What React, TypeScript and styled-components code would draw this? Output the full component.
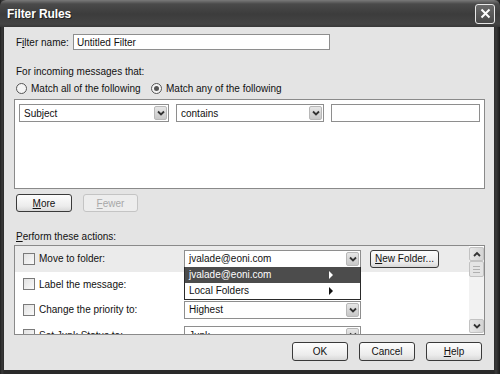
import React from "react";
import styled, { createGlobalStyle } from "styled-components";

const Global = createGlobalStyle`
  html, body { margin: 0; padding: 0; background: #2e2e2e; }
  body { font-family: "Liberation Sans", Arial, sans-serif; font-size: 10px; color: #111; }
`;

const Window = styled.div`
  width: 500px;
  height: 374px;
  display: flex;
  flex-direction: column;
  background: linear-gradient(90deg, #1e1e1e, #3a3a3a 2px, #2a2a2a 4px, #2a2a2a 494px, #3a3a3a 496px, #1a1a1a);
  overflow: hidden;
`;

const TitleBar = styled.div`
  height: 27px;
  flex: none;
  display: flex;
  align-items: center;
  justify-content: space-between;
  padding: 0 5px 0 7px;
  background: linear-gradient(#7a7a7a, #4a4a4a 4px, #3c3c3c 14px, #444 24px, #383838);
  border-radius: 6px 6px 0 0;
`;

const Title = styled.span`
  color: #fff;
  font-weight: bold;
  font-size: 12px;
  letter-spacing: -0.1px;
  text-shadow: 1px 1px 0 #222;
`;

const CloseButton = styled.div`
  width: 18px;
  height: 18px;
  border: 1px solid #e8e8e8;
  border-radius: 3px;
  background: linear-gradient(#6a6a6a, #4a4a4a);
  display: flex;
  align-items: center;
  justify-content: center;
`;

const Body = styled.div`
  flex: 1;
  margin: 0 6px 4px 4px;
  background: #e4e4e4;
  padding: 7px 9px 0 10px;
  display: flex;
  flex-direction: column;
`;

const FieldRow = styled.div`
  display: flex;
  align-items: center;
  height: 16px;
  padding-left: 2px;
`;

const Label = styled.span<{ $width?: number }>`
  width: ${(p) => (p.$width ? `${p.$width}px` : "auto")};
  flex: none;
  white-space: nowrap;
`;

const TextInput = styled.div<{ $width: number; $height?: number }>`
  width: ${(p) => p.$width}px;
  height: ${(p) => p.$height ?? 16}px;
  box-sizing: border-box;
  border: 1px solid #8e8e8e;
  background: #fff;
  display: flex;
  align-items: center;
  padding-left: 3px;
  flex: none;
`;

const SectionLabel = styled.div<{ $top: number }>`
  margin-top: ${(p) => p.$top}px;
  padding-left: 2px;
  height: 12px;
  line-height: 12px;
`;

const RadioRow = styled.div`
  margin-top: 4px;
  height: 13px;
  display: flex;
  align-items: center;
  padding-left: 2px;
`;

const RadioItem = styled.label<{ $width?: number }>`
  display: flex;
  align-items: center;
  gap: 4px;
  width: ${(p) => (p.$width ? `${p.$width}px` : "auto")};
`;

const RadioCircle = styled.span<{ $checked?: boolean }>`
  width: 11px;
  height: 11px;
  box-sizing: border-box;
  border-radius: 50%;
  border: 1px solid #555;
  background: #f4f4f4;
  display: flex;
  align-items: center;
  justify-content: center;
  &::after {
    content: "";
    display: ${(p) => (p.$checked ? "block" : "none")};
    width: 5px;
    height: 5px;
    border-radius: 50%;
    background: #555;
  }
`;

const RulesBox = styled.div`
  margin-top: 4px;
  height: 90px;
  box-sizing: border-box;
  border: 1px solid #8a8a8a;
  background: #fff;
  padding: 4px;
  display: flex;
  gap: 7px;
  align-items: flex-start;
`;

const ComboBox = styled.div<{ $width: number }>`
  position: relative;
  width: ${(p) => p.$width}px;
  height: 18px;
  box-sizing: border-box;
  border: 1px solid #8e8e8e;
  background: #fff;
  display: flex;
  align-items: center;
  padding-left: 4px;
  flex: none;
`;

const ComboText = styled.span`
  flex: 1;
`;

const ComboArrow = styled.span`
  width: 13px;
  height: 14px;
  margin-right: 1px;
  box-sizing: border-box;
  border: 1px solid #b8b8b8;
  border-radius: 2px;
  background: linear-gradient(#e6e6e6, #c8c8c8);
  display: flex;
  align-items: center;
  justify-content: center;
`;

const ButtonRow = styled.div<{ $top: number; $end?: boolean }>`
  margin-top: ${(p) => p.$top}px;
  display: flex;
  gap: 11px;
  padding-left: 2px;
  justify-content: ${(p) => (p.$end ? "flex-end" : "flex-start")};
  padding-right: ${(p) => (p.$end ? 3 : 0)}px;
`;

const Button = styled.div<{ $width: number; $disabled?: boolean; $height?: number; $gap?: number }>`
  width: ${(p) => p.$width}px;
  height: ${(p) => p.$height ?? 18}px;
  margin-left: ${(p) => p.$gap ?? 0}px;
  box-sizing: border-box;
  border: 1px solid ${(p) => (p.$disabled ? "#c4c4c4" : "#3a3a3a")};
  border-radius: 3px;
  background: ${(p) => (p.$disabled ? "#ededed" : "linear-gradient(#fdfdfd, #ececec 70%, #d8d8d8)")};
  color: ${(p) => (p.$disabled ? "#a8a8a8" : "#111")};
  display: flex;
  align-items: center;
  justify-content: center;
  flex: none;
  u { text-decoration: underline; }
`;

const ActionsBox = styled.div`
  margin-top: 2px;
  height: 90px;
  box-sizing: border-box;
  border: 1px solid #8a8a8a;
  background: #fff;
  display: flex;
  overflow: hidden;
`;

const ActionRows = styled.div`
  flex: 1;
`;

const ActionRow = styled.div<{ $active?: boolean }>`
  height: 25.5px;
  display: flex;
  align-items: center;
  padding-left: 8px;
  background: ${(p) => (p.$active ? "#ebebeb" : "#fff")};
`;

const CheckBox = styled.span`
  width: 12px;
  height: 12px;
  box-sizing: border-box;
  border: 1px solid #7a7a7a;
  background: linear-gradient(135deg, #e2e2e2, #fafafa);
  margin-right: 4px;
  flex: none;
`;

const Menu = styled.div`
  position: absolute;
  top: 16px;
  left: -1px;
  width: 177px;
  box-sizing: border-box;
  border: 1px solid #2a2a2a;
  border-top: none;
  background: #fff;
  z-index: 2;
`;

const MenuItem = styled.div<{ $selected?: boolean }>`
  height: 16px;
  display: flex;
  align-items: center;
  justify-content: space-between;
  padding: 0 27px 0 4px;
  background: ${(p) => (p.$selected ? "#4c4c4c" : "#fff")};
  color: ${(p) => (p.$selected ? "#fff" : "#111")};
  &::after {
    content: "";
    border-left: 4px solid ${(p) => (p.$selected ? "#fff" : "#111")};
    border-top: 4px solid transparent;
    border-bottom: 4px solid transparent;
  }
`;

const ScrollBar = styled.div`
  width: 15px;
  margin: 1px 0 1px 0;
  background: #f2f2f2;
  display: flex;
  flex-direction: column;
  justify-content: space-between;
`;

const ScrollTop = styled.div`
  display: flex;
  flex-direction: column;
`;

const ScrollButton = styled.div`
  width: 15px;
  height: 14px;
  box-sizing: border-box;
  border: 1px solid #c2c2c2;
  border-radius: 2px;
  background: linear-gradient(90deg, #e8e8e8, #d4d4d4);
  display: flex;
  align-items: center;
  justify-content: center;
`;

const Thumb = styled.div`
  height: 16px;
  box-sizing: border-box;
  border: 1px solid #c2c2c2;
  border-radius: 2px;
  background: #e4e4e4;
  display: flex;
  flex-direction: column;
  align-items: center;
  justify-content: center;
  gap: 2px;
  span {
    width: 7px;
    height: 1px;
    background: #b0b0b0;
  }
`;

const Chevron = ({ up }: { up?: boolean }) => (
  <svg width="8" height="6" viewBox="0 0 8 6">
    <path
      d={up ? "M1 5 L4 2 L7 5" : "M1 1.5 L4 4.5 L7 1.5"}
      fill="none"
      stroke="#333"
      strokeWidth="1.8"
    />
  </svg>
);

function Combo({ width, value, children }: { width: number; value: string; children?: React.ReactNode }) {
  return (
    <ComboBox $width={width}>
      <ComboText>{value}</ComboText>
      <ComboArrow>
        <Chevron />
      </ComboArrow>
      {children}
    </ComboBox>
  );
}

export default function App() {
  return (
    <>
      <Global />
      <Window>
        <TitleBar>
          <Title>Filter Rules</Title>
          <CloseButton>
            <svg width="11" height="11" viewBox="0 0 11 11">
              <path d="M1.5 1.5 L9.5 9.5 M9.5 1.5 L1.5 9.5" stroke="#fff" strokeWidth="2" />
            </svg>
          </CloseButton>
        </TitleBar>
        <Body>
          <FieldRow>
            <Label $width={57}>
              F<u>i</u>lter name:
            </Label>
            <TextInput $width={257}>Untitled Filter</TextInput>
          </FieldRow>

          <SectionLabel $top={16}>For incoming messages that:</SectionLabel>
          <RadioRow>
            <RadioItem $width={135}>
              <RadioCircle />
              Match all of the following
            </RadioItem>
            <RadioItem>
              <RadioCircle $checked />
              Match any of the following
            </RadioItem>
          </RadioRow>

          <RulesBox>
            <Combo width={150} value="Subject" />
            <Combo width={148} value="contains" />
            <TextInput $width={149} $height={18} />
          </RulesBox>

          <ButtonRow $top={5}>
            <Button $width={56}>
              <span>
                <u>M</u>ore
              </span>
            </Button>
            <Button $width={55} $disabled>
              <span>
                <u>F</u>ewer
              </span>
            </Button>
          </ButtonRow>

          <SectionLabel $top={19}>
            <u>P</u>erform these actions:
          </SectionLabel>
          <ActionsBox>
            <ActionRows>
              <ActionRow $active>
                <CheckBox />
                <Label $width={145}>Move to folder:</Label>
                <Combo width={177} value="jvalade@eoni.com">
                  <Menu>
                    <MenuItem $selected>jvalade@eoni.com</MenuItem>
                    <MenuItem>Local Folders</MenuItem>
                  </Menu>
                </Combo>
                <Button $width={69} $gap={9}>
                  <span>
                    <u>N</u>ew Folder...
                  </span>
                </Button>
              </ActionRow>
              <ActionRow>
                <CheckBox />
                <Label $width={145}>Label the message:</Label>
              </ActionRow>
              <ActionRow>
                <CheckBox />
                <Label $width={145}>Change the priority to:</Label>
                <Combo width={177} value="Highest" />
              </ActionRow>
              <ActionRow>
                <CheckBox />
                <Label $width={145}>Set Junk Status to:</Label>
                <Combo width={177} value="Junk" />
              </ActionRow>
            </ActionRows>
            <ScrollBar>
              <ScrollTop>
                <ScrollButton>
                  <Chevron up />
                </ScrollButton>
                <Thumb>
                  <span />
                  <span />
                  <span />
                </Thumb>
              </ScrollTop>
              <ScrollButton>
                <Chevron />
              </ScrollButton>
            </ScrollBar>
          </ActionsBox>

          <ButtonRow $top={7} $end>
            <Button $width={56} $height={19}>
              OK
            </Button>
            <Button $width={56} $height={19}>
              Cancel
            </Button>
            <Button $width={56} $height={19}>
              <span>
                <u>H</u>elp
              </span>
            </Button>
          </ButtonRow>
        </Body>
      </Window>
    </>
  );
}
